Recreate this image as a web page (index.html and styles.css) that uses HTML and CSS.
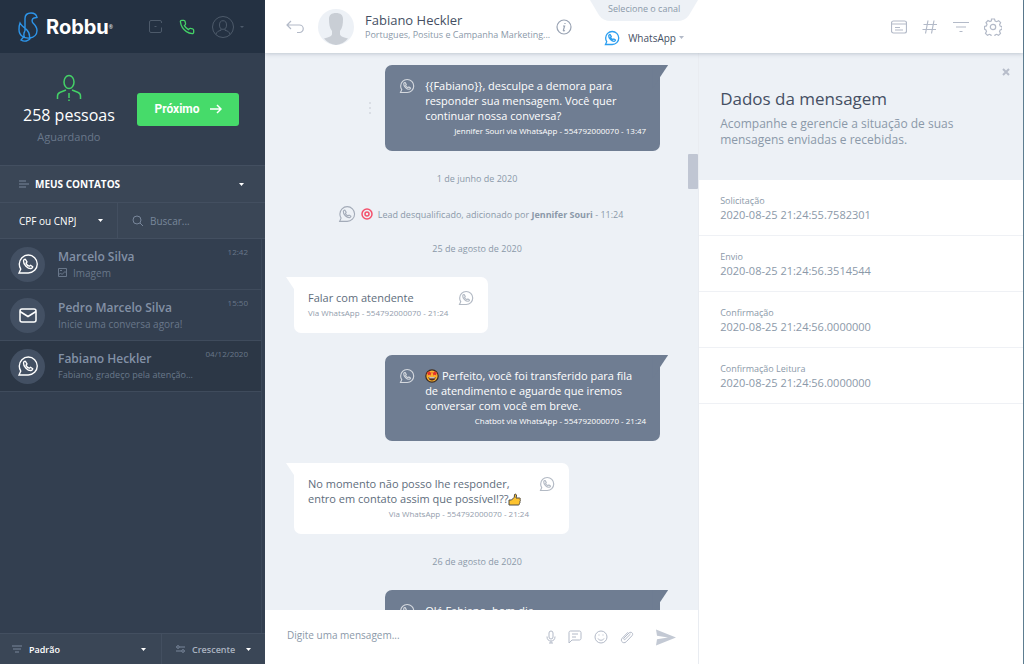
FILE: index.html
```html
<!DOCTYPE html>
<html lang="pt-BR">
<head>
    <meta charset="UTF-8">
    <meta name="viewport" content="width=device-width, initial-scale=1.0">
    <title>Robbu</title>
    <link rel="stylesheet" href="styles.css">
</head>
<body>
    <!-- Shared icons -->
    <svg class="sprite" width="0" height="0" aria-hidden="true">
        <symbol id="phone" viewBox="0 0 24 24">
            <path d="M22 16.9v3a2 2 0 0 1-2.2 2 19.8 19.8 0 0 1-8.6-3 19.5 19.5 0 0 1-6-6 19.8 19.8 0 0 1-3.1-8.7A2 2 0 0 1 4.1 2h3a2 2 0 0 1 2 1.7c.1 1 .4 1.9.7 2.8a2 2 0 0 1-.4 2.1L8.1 9.9a16 16 0 0 0 6 6l1.3-1.3a2 2 0 0 1 2.1-.4c.9.3 1.8.6 2.8.7a2 2 0 0 1 1.7 2z"/>
        </symbol>
        <symbol id="whatsapp" viewBox="0 0 24 24">
            <path d="M2.5 12a9.8 9.8 0 1 1 9.8 9.8H2.2l1.9-4.3A9.8 9.8 0 0 1 2.5 12z"/>
            <path d="M9.1 6.8c-.5-.3-1.9.6-2 1.9-.3 3.600 4.700 8.700 8.300 8.200 1.300-.2 2-1.500 1.700-2l-2.300-1.500-1.500 1c-1.700-.6-2.800-1.700-3.400-3.300l1-1.400z"/>
        </symbol>
    </svg>

    <div class="app">
        <aside class="sidebar">
            <header class="brand">
                <a class="logo" href="#" aria-label="Robbu">
                    <svg width="20" height="30" viewBox="0 0 20 30">
                        <path d="M7 19V6.500C7 3 9.500 1 13 1c3.500 0 5.500 2 6 4.500l-3 .5c-2 .7-2.500 3-1 5 2 2 4 4 4 7.500 0 4-3 7-7 7.500-6 .8-11-2.500-11-8.500 0-2.500.2-4.500 1-6.500 1.500 3 4 4.500 6.500 6.500C11 20 12 22 11.500 26M7 19c-1.500 2-1.500 4-.5 6.500M5.500 25L3 28c3 2 8 1.500 10-2.500"/>
                    </svg>
                    <span class="logo-text">Robbu</span><span class="logo-mark">®</span>
                </a>
                <nav class="brand-actions">
                    <button type="button" aria-label="Status">
                        <svg width="15" height="15" viewBox="0 0 15 15"><path d="M13.500 4V3A1.500 1.500 0 0 0 12 1.500H3A1.500 1.500 0 0 0 1.500 3v9A1.500 1.500 0 0 0 3 13.500h9a1.500 1.500 0 0 0 1.500-1.500V8.500M6.500 7.500h2"/></svg>
                    </button>
                    <button class="call" type="button" aria-label="Telefone">
                        <svg width="16" height="16"><use href="#phone"/></svg>
                    </button>
                    <button class="profile" type="button" aria-label="Perfil">
                        <svg width="24" height="24" viewBox="0 0 24 24"><circle cx="12" cy="12" r="10.500"/><ellipse cx="12" cy="10" rx="3.500" ry="4.300"/><path d="M5 19.500c.5-2.500 2-3.500 5-4.200v-1.700M19 19.500c-.5-2.500-2-3.500-5-4.200v-1.700"/></svg>
                        <span class="caret"></span>
                    </button>
                </nav>
            </header>

            <section class="queue">
                <div class="queue-info">
                    <svg width="26" height="28" viewBox="0 0 26 28"><ellipse cx="13" cy="8" rx="5" ry="6.500"/><path d="M1.500 25v-3c0-2 1-3 2.800-3.700L10 16M24.500 25v-3c0-2-1-3-2.800-3.700L16 16M13 19v5M13 25.500V27"/></svg>
                    <strong>258 pessoas</strong>
                    <span>Aguardando</span>
                </div>
                <button class="next" type="button">
                    Próximo
                    <svg width="13" height="10" viewBox="0 0 13 10"><path d="M1 5h11M8 1l4 4-4 4"/></svg>
                </button>
            </section>

            <div class="bar">
                <label class="field list-select">
                    <svg width="10" height="8" viewBox="0 0 10 8"><path d="M0 1h7M0 4h10M0 7h7"/></svg>
                    <select aria-label="Lista de contatos"><option>MEUS CONTATOS</option></select>
                </label>
            </div>
            <div class="bar search">
                <label class="field doc-select">
                    <select aria-label="Tipo de busca"><option>CPF ou CNPJ</option></select>
                </label>
                <label class="field search-box">
                    <svg width="12" height="12" viewBox="0 0 12 12"><circle cx="5" cy="5" r="4"/><path d="M8 8l3 3"/></svg>
                    <input type="search" placeholder="Buscar..." aria-label="Buscar">
                </label>
            </div>

            <ul class="contacts">
                <li class="contact">
                    <span class="contact-icon"><svg width="22" height="22"><use href="#whatsapp"/></svg></span>
                    <div class="contact-text">
                        <h3>Marcelo Silva</h3>
                        <p><svg width="9" height="9" viewBox="0 0 9 9"><path d="M.5.500h8v8h-8zM.5 7l2-2 1.500 1.500L7 3.500 8.500 5M2 2.500h2"/></svg> Imagem</p>
                    </div>
                    <time>12:42</time>
                </li>
                <li class="contact">
                    <span class="contact-icon"><svg width="18" height="15" viewBox="0 0 18 15"><rect x="1" y="1" width="16" height="13" rx="2"/><path d="M1 3.500l8 5 8-5"/></svg></span>
                    <div class="contact-text">
                        <h3>Pedro Marcelo Silva</h3>
                        <p>Inicie uma conversa agora!</p>
                    </div>
                    <time>15:50</time>
                </li>
                <li class="contact selected">
                    <span class="contact-icon"><svg width="22" height="22"><use href="#whatsapp"/></svg></span>
                    <div class="contact-text">
                        <h3>Fabiano Heckler</h3>
                        <p class="small">Fabiano, gradeço pela atenção...</p>
                    </div>
                    <time>04/12/2020</time>
                </li>
            </ul>

            <footer class="bar sort">
                <label class="field sort-by">
                    <svg width="10" height="8" viewBox="0 0 10 8"><path d="M0 1h10M1 4h8M3 7h4"/></svg>
                    <select aria-label="Ordenar por"><option>Padrão</option></select>
                </label>
                <label class="field sort-order">
                    <svg width="9" height="8" viewBox="0 0 9 8"><path d="M3.500 2H9M0 6h5.500M0 2h.5M8.500 6H9"/><circle cx="2" cy="2" r="1.300"/><circle cx="7" cy="6" r="1.300"/></svg>
                    <select aria-label="Ordem"><option>Crescente</option></select>
                </label>
            </footer>
        </aside>

        <header class="topbar">
            <div class="topbar-contact">
                <button type="button" aria-label="Voltar">
                    <svg width="18" height="14" viewBox="0 0 18 14"><path d="M5 1L1 5l4 4M1 5h12.500a3.500 3.500 0 0 1 0 7.500H11"/></svg>
                </button>
                <svg class="avatar" width="36" height="36" viewBox="0 0 36 36">
                    <circle class="avatar-bg" cx="18" cy="18" r="18"/>
                    <path class="avatar-fg" d="M11 10c0-4 2.500-6 7-6s7 2 7 6c0 5-.5 9-3 12v3c0 2 2.500 3 8 4.500A18 18 0 0 1 18 36 18 18 0 0 1 6 29.500c5.500-1.500 8-2.500 8-4.500v-3c-2.500-3-3-7-3-12z"/>
                </svg>
                <div class="topbar-name">
                    <h1>Fabiano Heckler</h1>
                    <p>Portugues, Positus e Campanha Marketing...</p>
                </div>
                <button class="info" type="button" aria-label="Informações">
                    <svg width="16" height="16" viewBox="0 0 16 16"><circle cx="8" cy="8" r="7"/><path d="M9 4v1M7 7h1.600l-1.200 4.200c-.2.700.5.900 1.600.3"/></svg>
                </button>
                <div class="channel">
                    <span class="channel-tab">Selecione o canal</span>
                    <label class="field channel-select">
                        <svg width="16" height="16"><use href="#whatsapp"/></svg>
                        <select aria-label="Canal"><option>WhatsApp</option></select>
                    </label>
                </div>
            </div>
            <nav class="topbar-actions">
                <button type="button" aria-label="Notas">
                    <svg width="16" height="14" viewBox="0 0 16 14"><rect x=".500" y="1" width="15" height="12" rx="2"/><path d="M.500 4h15M4 7.500h5M4 10h8"/></svg>
                </button>
                <button type="button" aria-label="Etiquetas">
                    <svg width="16" height="14" viewBox="0 0 16 14"><path d="M6 .500l-2.500 13M12 .500l-2.500 13M1.500 4.500H15M.500 9.500H14"/></svg>
                </button>
                <button type="button" aria-label="Filtros">
                    <svg width="16" height="12" viewBox="0 0 16 12"><path d="M0 1.500h16M3 6h10M6.500 10.500h3"/></svg>
                </button>
                <button type="button" aria-label="Configurações">
                    <svg width="18" height="18" viewBox="0 0 18 18"><circle cx="9" cy="9" r="2.700"/><path d="M7.500 1h3l.6 2 1.600.7 1.900-1 2 2-1 1.900.6 1.500 1.800.600v2.600l-1.800.6-.7 1.500 1 1.900-2 2-1.900-1-1.500.7-.6 2h-3l-.6-2-1.500-.7-1.900 1-2-2 1-1.900-.6-1.500L.5 11V8.500l1.900-.6.6-1.500-1-1.900 2-2 1.900 1 1.500-.7z"/></svg>
                </button>
            </nav>
        </header>

        <main class="chat">
            <div class="chat-body">
                <div class="messages">
                    <div class="message sent">
                        <button class="more" type="button" aria-label="Opções">
                            <svg width="4" height="12" viewBox="0 0 4 12"><path d="M1 1h2M1 6h2M1 11h2"/></svg>
                        </button>
                        <div class="bubble">
                            <svg width="16" height="16"><use href="#whatsapp"/></svg>
                            <div class="bubble-text">
                                <p>{{Fabiano}}, desculpe a demora para responder sua mensagem. Você quer continuar nossa conversa?</p>
                                <small>Jennifer Souri via WhatsApp - 554792000070 - 13:47</small>
                            </div>
                        </div>
                    </div>

                    <p class="date">1 de junho de 2020</p>
                    <p class="event">
                        <svg class="event-channel" width="18" height="18"><use href="#whatsapp"/></svg>
                        <svg class="target" width="12" height="12" viewBox="0 0 12 12"><circle cx="6" cy="6" r="5"/><circle cx="6" cy="6" r="2"/></svg>
                        <span>Lead desqualificado, adicionado por <b>Jennifer Souri</b> - 11:24</span>
                    </p>
                    <p class="date">25 de agosto de 2020</p>

                    <div class="message received">
                        <div class="bubble">
                            <div class="bubble-text">
                                <p>Falar com atendente</p>
                                <small>Via WhatsApp - 554792000070 - 21:24</small>
                            </div>
                            <svg width="16" height="16"><use href="#whatsapp"/></svg>
                        </div>
                    </div>

                    <div class="message sent">
                        <div class="bubble">
                            <svg width="16" height="16"><use href="#whatsapp"/></svg>
                            <div class="bubble-text">
                                <p><svg class="emoji" width="14" height="14" viewBox="0 0 14 14" role="img" aria-label="Rosto com olhos de estrela"><circle cx="7" cy="7" r="6.200" fill="#fbb02e" stroke="#3a2b23" stroke-width="1.200"/><path d="M1.500 3.500l2-.3L4.300 2l.9 1.400 1.700.2-1.200 1.300.3 1.700-1.700-.8-1.600.8.200-1.700zM7.100 3.600l1.700-.2.900-1.400.8 1.200 2 .3-1.400 1.400.2 1.700-1.600-.8-1.700.8.300-1.700z" fill="#e2322d"/><path d="M3.500 8h7c0 2.300-1.500 3.600-3.500 3.600S3.500 10.300 3.500 8z" fill="#4a2a20"/><path d="M4.200 8.300h5.600v1H4.200z" fill="#fff"/></svg> Perfeito, você foi transferido para fila de atendimento e aguarde que iremos conversar com você em breve.</p>
                                <small>Chatbot via WhatsApp - 554792000070 - 21:24</small>
                            </div>
                        </div>
                    </div>

                    <div class="message received">
                        <div class="bubble">
                            <div class="bubble-text">
                                <p>No momento não posso lhe responder, entro em contato assim que possível!??<svg class="emoji" width="13" height="13" viewBox="0 0 13 13" role="img" aria-label="Joinha"><path d="M1 7h2.500L6.300 4.200 6.500 1.500C7.500.500 8.700 1.500 8.500 3L8 5h3.500c1 0 1.200 1.300.5 1.800.6.600.4 1.500-.2 1.900.4.600.2 1.300-.4 1.700.2.900-.3 1.600-1.200 1.600H1z" fill="#fdc32f" stroke="#4f4a45"/></svg></p>
                                <small>Via WhatsApp - 554792000070 - 21:24</small>
                            </div>
                            <svg width="16" height="16"><use href="#whatsapp"/></svg>
                        </div>
                    </div>

                    <p class="date">26 de agosto de 2020</p>

                    <div class="message sent">
                        <div class="bubble">
                            <svg width="16" height="16"><use href="#whatsapp"/></svg>
                            <div class="bubble-text">
                                <p>Olá Fabiano, bom dia</p>
                            </div>
                        </div>
                    </div>
                </div>
                <div class="scrollbar"><span></span></div>
            </div>

            <form class="composer">
                <input type="text" placeholder="Digite uma mensagem..." aria-label="Mensagem">
                <button type="button" aria-label="Gravar áudio">
                    <svg width="10" height="14" viewBox="0 0 10 14"><rect x="3" y="1" width="4" height="8" rx="2"/><path d="M1 6.500c0 3 1.500 4.500 4 4.500s4-1.500 4-4.500M5 11v2M3 13h4"/></svg>
                </button>
                <button type="button" aria-label="Respostas rápidas">
                    <svg width="14" height="14" viewBox="0 0 14 14"><path d="M1 13V2.500C1 1.700 1.700 1 2.500 1h9c.8 0 1.500.7 1.500 1.500v6c0 .8-.7 1.500-1.500 1.500H4zM4 4h6M4 7h4"/></svg>
                </button>
                <button type="button" aria-label="Emojis">
                    <svg width="14" height="14" viewBox="0 0 14 14"><circle cx="7" cy="7" r="6"/><path d="M4 8.500c1 2.300 5 2.300 6 0M4.500 5h1M8.500 5h1"/></svg>
                </button>
                <button type="button" aria-label="Anexar">
                    <svg width="14" height="14" viewBox="0 0 14 14"><path d="M10.500 4L5.300 9.200c-1 1-2.300-.2-1.300-1.200L9 3c2-2 5 .500 3 2.700l-5.700 6C3.500 14.500-.3 11 2.200 8.200L8 2.200"/></svg>
                </button>
                <button class="send" type="submit" aria-label="Enviar">
                    <svg width="20" height="17" viewBox="0 0 20 17"><path d="M0 .500l20 8-20 8 1-6.300 11-1.700L1 6.800z"/></svg>
                </button>
            </form>
        </main>

        <section class="details">
            <header class="details-head">
                <button class="close" type="button" aria-label="Fechar">
                    <svg width="8" height="8" viewBox="0 0 8 8"><path d="M1 1l6 6M7 1L1 7"/></svg>
                </button>
                <h2>Dados da mensagem</h2>
                <p>Acompanhe e gerencie a situação de suas mensagens enviadas e recebidas.</p>
            </header>
            <dl class="details-list">
                <div><dt>Solicitação</dt><dd>2020-08-25 21:24:55.7582301</dd></div>
                <div><dt>Envio</dt><dd>2020-08-25 21:24:56.3514544</dd></div>
                <div><dt>Confirmação</dt><dd>2020-08-25 21:24:56.0000000</dd></div>
                <div><dt>Confirmação Leitura</dt><dd>2020-08-25 21:24:56.0000000</dd></div>
            </dl>
        </section>
    </div>
</body>
</html>
```
FILE: styles.css
```css
* {
    box-sizing: border-box;
}
body, h1, h2, h3, p, ul, dl, dd {
    margin: 0;
    padding: 0;
}
body {
    font-family: "Open Sans", "Noto Sans", sans-serif;
    font-size: 11px;
    color: #8b99a9;
}
h1, h2, h3 {
    font-weight: 400;
}
ul {
    list-style: none;
}
button, input, select {
    appearance: none;
    margin: 0;
    padding: 0;
    border: none;
    border-radius: 0;
    background-color: transparent;
    color: inherit;
    font: inherit;
    outline: none;
}
button, select {
    cursor: pointer;
}
button {
    display: flex;
    align-items: center;
}
svg {
    display: block;
    flex: none;
    fill: none;
    stroke: currentColor;
}
.sprite {
    position: absolute;
}
.app {
    display: grid;
    grid-template-columns: 265px minmax(0, 4fr) minmax(0, 3fr);
    grid-template-rows: 53px minmax(0, 1fr);
    height: 100vh;
    border-right: 1px solid #5d7d90;
    background-color: #fff;
}
.caret {
    border: 2px solid transparent;
    border-top-color: currentColor;
    border-bottom: none;
}

/* Fields with a drop-down arrow */
.field {
    display: flex;
    align-items: center;
    min-width: 0;
}
.field select, .field input {
    flex: 1;
    min-width: 0;
    height: 20px;
}
.field select {
    background: url("data:image/svg+xml,%3Csvg xmlns='http://www.w3.org/2000/svg' width='5' height='3'%3E%3Cpath d='M0 0h5L2.500 3z' fill='%23fff'/%3E%3C/svg%3E") no-repeat right center;
}
option {
    color: #333f50;
}

/* Sidebar */
.sidebar {
    grid-row: 1 / 3;
    display: flex;
    flex-direction: column;
    background-color: #333f50;
}
.brand {
    display: flex;
    align-items: center;
    justify-content: space-between;
    height: 53px;
    padding: 0 21px 0 18px;
    background-color: #243142;
}
.logo {
    display: flex;
    align-items: center;
    color: #2d95ea;
    text-decoration: none;
}
.logo svg {
    stroke-width: 1.4;
}
.logo-text {
    margin-left: 8px;
    font: 700 20px/24px Inter, sans-serif;
    color: #fff;
}
.logo-mark {
    font-size: 5px;
    color: #fff;
}
.brand-actions {
    display: flex;
    align-items: center;
    gap: 16px;
    color: #4d5a6a;
}
.call {
    color: #44d167;
}
.call svg {
    stroke-width: 2;
}
.profile {
    gap: 5px;
}
.queue {
    display: flex;
    align-items: center;
    justify-content: space-between;
    height: 112px;
    padding: 0 26px 0 23px;
}
.queue-info {
    display: flex;
    flex-direction: column;
    align-items: center;
    padding-top: 2px;
    color: #69778a;
}
.queue-info svg {
    color: #44d167;
    stroke-width: 1.5;
}
.queue-info strong {
    font-size: 16px;
    font-weight: 400;
    line-height: 26px;
    color: #fff;
}
.queue-info span {
    line-height: 18px;
}
.next {
    justify-content: center;
    gap: 9px;
    width: 102px;
    height: 33px;
    border-radius: 3px;
    background-color: #46db6a;
    color: #fff;
    font: 700 12px/16px Roboto, sans-serif;
}
.next svg {
    stroke-width: 1.5;
}
.bar {
    display: flex;
    height: 37px;
    border-top: 1px solid #434f60;
    background-color: #3a4656;
    color: #fff;
}
.bar .field {
    padding: 0 21px 0 19px;
}
.bar svg {
    color: #78869a;
}
.list-select {
    flex: 1;
    gap: 6px;
    font-size: 10px;
    font-weight: 700;
}
.search {
    border-bottom: 1px solid #434f60;
}
.bar .doc-select {
    width: 118px;
    padding-right: 14px;
    border-right: 1px solid #434f60;
    font-size: 10px;
}
.bar .search-box {
    flex: 1;
    gap: 6px;
    padding-left: 14px;
    font-size: 10px;
}
input::placeholder {
    color: #78869a;
    opacity: 1;
}
.contacts {
    flex: 1;
    margin-right: 3px;
    border-right: 1px solid #3b4859;
}
.contact {
    display: flex;
    align-items: center;
    height: 51px;
    padding: 0 13px 0 10px;
    border-bottom: 1px solid #3f4b5c;
    color: #69778a;
}
.selected {
    background-color: #2c3746;
}
.contact-icon {
    display: flex;
    align-items: center;
    justify-content: center;
    width: 35px;
    height: 35px;
    border-radius: 50%;
    background-color: #435063;
    color: #fff;
}
.contact-icon svg {
    stroke-width: 1.5;
}
.contact-text {
    flex: 1;
    margin-left: 13px;
}
.contact h3 {
    font-size: 12px;
    font-weight: 600;
    line-height: 17px;
    color: #8391a6;
}
.contact p {
    display: flex;
    align-items: center;
    gap: 6px;
    font-size: 10px;
    line-height: 16px;
}
.contact .small {
    font-size: 9px;
}
.contact time {
    align-self: flex-start;
    margin-top: 7px;
    font-size: 8px;
    line-height: 12px;
}
.sort {
    height: 31px;
    font-size: 9px;
}
.sort .field {
    gap: 7px;
}
.bar .sort-by {
    width: 162px;
    padding: 0 15px 0 12px;
    border-right: 1px solid #434f60;
    font-weight: 600;
}
.bar .sort-order {
    flex: 1;
    padding: 0 14px;
    color: #aab3c0;
}
.sort-order select {
    font-weight: 600;
}

/* Top bar */
.topbar {
    grid-column: 2 / 4;
    display: grid;
    grid-template-columns: minmax(0, 4fr) minmax(0, 3fr);
    z-index: 1;
    background-color: #fff;
    box-shadow: 0 1px 4px rgba(60, 75, 100, 0.25);
    color: #b3bac8;
}
.topbar-contact {
    display: flex;
    align-items: center;
    padding-left: 21px;
}
.topbar svg {
    stroke-width: 1.2;
}
.topbar .avatar {
    margin: 0 11px 0 14px;
    stroke: none;
}
.avatar-bg {
    fill: #edf1f6;
}
.avatar-fg {
    fill: #c9ced5;
}
.topbar-name {
    flex: 1;
    min-width: 0;
    white-space: nowrap;
}
.topbar-name h1 {
    font-size: 13px;
    line-height: 16px;
    color: #454f63;
}
.topbar-name p {
    font-size: 9px;
    line-height: 14px;
    color: #8b99a9;
}
.info {
    margin: 0 18px 0 4px;
    color: #99a3b3;
}
.channel {
    align-self: flex-start;
    width: 108px;
    font-size: 9px;
}
.channel-tab {
    display: block;
    height: 21px;
    background: url("data:image/svg+xml,%3Csvg xmlns='http://www.w3.org/2000/svg' viewBox='0 0 109 21' preserveAspectRatio='none'%3E%3Cpath d='M0 0h109L100 15Q96 21 88 21H21Q13 21 9 15z' fill='%23edf1f6'/%3E%3C/svg%3E") no-repeat center / 100% 100%;
    line-height: 18px;
    text-align: center;
    color: #8b99a9;
}
.channel-select {
    height: 33px;
    padding: 0 14px;
    gap: 8px;
    font-size: 10px;
    color: #454f63;
}
.channel-select svg {
    color: #2d9ff0;
    stroke-width: 2;
}
.channel-select select {
    background-image: url("data:image/svg+xml,%3Csvg xmlns='http://www.w3.org/2000/svg' width='5' height='3'%3E%3Cpath d='M0 0h5L2.500 3z' fill='%23b3bac8'/%3E%3C/svg%3E");
}
.topbar-actions {
    display: flex;
    align-items: center;
    justify-content: flex-end;
    gap: 15px;
    padding-right: 21px;
}

/* Conversation */
.chat {
    display: flex;
    flex-direction: column;
    min-width: 0;
}
.chat-body {
    display: flex;
    flex: 1;
    min-height: 0;
    background-color: #edf1f6;
}
.messages {
    display: flex;
    flex: 1;
    flex-direction: column;
    gap: 22px;
    min-width: 0;
    padding: 12px 28px 0 29px;
    overflow: hidden;
}
.message {
    display: flex;
    flex: none;
    align-items: center;
}
.sent {
    justify-content: flex-end;
}
.more {
    margin-right: 13px;
    color: #d3d8e0;
}
.more svg {
    stroke-width: 1.5;
}
.bubble {
    position: relative;
    display: flex;
    gap: 10px;
    max-width: 275px;
    padding: 13px 14px;
    border-radius: 7px;
}
.bubble > svg {
    opacity: 0.7;
    stroke-width: 1.7;
}
.bubble::before {
    content: "";
    position: absolute;
    top: 0;
    width: 16px;
    height: 24px;
    background-color: inherit;
}
.bubble-text {
    flex: 1;
    line-height: 15px;
}
.bubble small {
    display: block;
    font-size: 8px;
    text-align: right;
}
.sent .bubble {
    width: 275px;
    background-color: #6f7d92;
    color: #fff;
}
.sent .bubble::before {
    right: -8px;
    clip-path: polygon(0 0, 100% 0, 0 100%);
}
.received .bubble {
    background-color: #fff;
    color: #606d7c;
}
.received .bubble::before {
    left: -8px;
    clip-path: polygon(0 0, 100% 0, 100% 100%);
}
.received svg, .received small {
    color: #939dac;
}
.emoji {
    display: inline-block;
    stroke: none;
    vertical-align: -3px;
}
.date {
    flex: none;
    font-size: 9px;
    line-height: 12px;
    text-align: center;
}
.event {
    display: flex;
    flex: none;
    align-items: center;
    justify-content: center;
    gap: 5px;
    height: 14px;
    padding-left: 7px;
    font-size: 9px;
}
.event-channel {
    color: #a3abb8;
    stroke-width: 1.5;
}
.target {
    color: #f4516c;
    stroke-width: 1.5;
}
.scrollbar {
    width: 10px;
    padding-top: 101px;
}
.scrollbar span {
    display: block;
    height: 35px;
    border-radius: 1px;
    background-color: #c0c6d3;
}
.composer {
    display: flex;
    align-items: center;
    gap: 12px;
    height: 54px;
    padding: 0 22px;
    color: #b3bac8;
}
.composer input {
    flex: 1;
    min-width: 0;
    height: 24px;
    padding-bottom: 5px;
    font-size: 10px;
    color: #454f63;
}
.composer input::placeholder {
    color: #8b99a9;
}
.send {
    margin-left: 10px;
}
.send svg {
    fill: #c3c9d4;
    stroke: none;
}

/* Message data */
.details {
    border-left: 1px solid #e9ecf1;
}
.details-head {
    height: 127px;
    padding: 15px 13px 0 21px;
    background-color: #edf1f6;
}
.close {
    margin-left: auto;
    color: #b7bdca;
}
.close svg {
    stroke-width: 2;
}
.details h2 {
    margin-top: 11px;
    font-size: 17px;
    line-height: 24px;
    color: #454f63;
}
.details-head p {
    max-width: 250px;
    margin-top: 5px;
    font-size: 12px;
    line-height: 16px;
}
.details-list div {
    padding: 14px 21px 13px;
    border-bottom: 1px solid #eff1f5;
    line-height: 14px;
}
.details-list dt {
    font-size: 9px;
}
```
